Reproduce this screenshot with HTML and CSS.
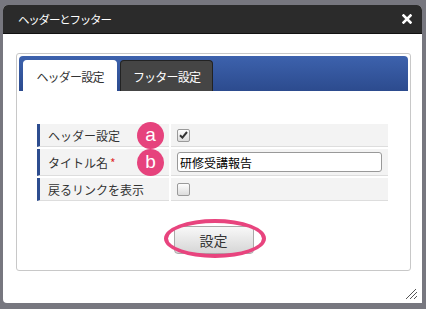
FILE: index.html
```html
<!DOCTYPE html>
<html>
  <head>
    <meta charset="utf-8">
    <title>ヘッダーとフッター</title>
    <link rel="stylesheet" href="styles.css">
  </head>
  <body>
    <div class="dialog">
      <div class="titlebar">
        <span class="title">ヘッダーとフッター</span>
        <svg class="close" width="10" height="10" viewBox="0 0 10 10">
          <path d="M1.5 1.5 L8.5 8.5 M8.5 1.5 L1.5 8.5" stroke="#fff" stroke-width="2.6" stroke-linecap="square"/>
        </svg>
      </div>
      <div class="dialog-body">
        <div class="panel">
          <div class="tabs">
            <div class="tab active">ヘッダー設定</div>
            <div class="tab">フッター設定</div>
          </div>
          <div class="tab-content">
            <div class="form-wrap">
              <table class="form">
                <tr>
                  <th>ヘッダー設定</th>
                  <td>
                    <span class="check checked">
                      <svg width="9" height="8" viewBox="0 0 9 8"><path d="M1 4.2 L3.4 6.6 L8 1" stroke="#333" stroke-width="2" fill="none"/></svg>
                    </span>
                  </td>
                </tr>
                <tr class="tall">
                  <th>タイトル名<span class="req">*</span></th>
                  <td><input class="text" type="text" value="研修受講報告"></td>
                </tr>
                <tr>
                  <th>戻るリンクを表示</th>
                  <td><span class="check"></span></td>
                </tr>
              </table>
              <span class="badge badge-a">a</span>
              <span class="badge badge-b">b</span>
            </div>
            <div class="actions">
              <button class="btn">設定</button>
              <span class="ring"></span>
            </div>
          </div>
        </div>
        <svg class="grip" width="13" height="12" viewBox="0 0 13 12">
          <path d="M1 11 L11 1 M5 11 L12 4 M9 11 L12 8" stroke="#555" stroke-width="1"/>
        </svg>
      </div>
    </div>
  </body>
</html>
```

FILE: styles.css
```css
html, body {
    margin: 0;
    height: 100%;
}

body {
    background: #77777f;
    font-family: "Noto Sans CJK JP", "Noto Sans", sans-serif;
    font-size: 12px;
    color: #333;
    overflow: hidden;
}

.dialog {
    margin: 5px 4px 0 3px;
    height: 298px;
    background: #fff;
    border-radius: 5px 5px 0 4px;
    display: flex;
    flex-direction: column;
}

.titlebar {
    height: 28px;
    background: #2b2b2b;
    border-bottom: 1px solid #111;
    border-radius: 5px 5px 0 0;
    display: flex;
    align-items: center;
    justify-content: space-between;
    padding: 0 10px 0 15px;
}

.title {
    color: #fff;
    font-size: 11.5px;
    letter-spacing: -1.2px;
}

.close {
    display: block;
}

.dialog-body {
    position: relative;
    flex: 1;
    padding: 19px 11px 0 13px;
}

.panel {
    border: 1px solid #c8c8c8;
    border-radius: 3px;
    padding: 2px;
    height: 212px;
}

.tabs {
    height: 31px;
    padding: 4px 4px 0 4px;
    background: linear-gradient(#3d62ad, #2c4b8e);
    border-radius: 4px 4px 0 0;
    display: flex;
    gap: 3px;
}

.tab {
    width: 93px;
    display: flex;
    align-items: center;
    justify-content: center;
    border-radius: 4px 4px 0 0;
    background: #454545;
    border: 1px solid #222;
    border-bottom: 0;
    color: #fff;
    letter-spacing: -0.8px;
    box-sizing: border-box;
}

.tab.active {
    width: 94px;
    background: #fff;
    border-color: #fff;
    color: #333;
}

.tab-content {
    padding: 31px 16px 0 16px;
}

.form-wrap {
    position: relative;
}

.form {
    width: 355px;
    border-collapse: separate;
    border-spacing: 2px;
}

.form th,
.form td {
    background: #f3f3f3;
    border-bottom: 1px solid #ddd;
    height: 22px;
    padding: 0;
    text-align: left;
    font-weight: normal;
}

.form th {
    width: 132px;
    border-left: 3px solid #2d4d8f;
    padding-left: 8px;
    box-sizing: border-box;
}

.form tr.tall th,
.form tr.tall td {
    height: 26px;
}

.form td {
    padding-left: 6px;
}

.req {
    color: #e03030;
    margin-left: 2px;
}

.check {
    display: flex;
    align-items: center;
    justify-content: center;
    width: 11px;
    height: 11px;
    border: 1px solid #9a9a9a;
    border-radius: 2px;
    background: linear-gradient(#fdfdfd, #dcdcdc);
}

.text {
    display: block;
    box-sizing: border-box;
    width: 205px;
    height: 20px;
    border: 1px solid #999;
    border-radius: 3px;
    padding: 0 2px;
    font-family: "Noto Sans CJK JP", sans-serif;
    font-size: 12px;
    color: #000;
    background: #fff;
}

.badge {
    position: absolute;
    left: 102px;
    width: 27px;
    height: 27px;
    border-radius: 50%;
    background: #e6437d;
    color: #fff;
    font-family: "Liberation Sans", Arial, sans-serif;
    font-size: 19px;
    line-height: 25px;
    text-align: center;
}

.badge-a {
    top: 0;
}

.badge-b {
    top: 27px;
}

.actions {
    position: relative;
    display: flex;
    justify-content: center;
    margin-top: 23px;
}

.btn {
    width: 80px;
    height: 28px;
    border: 1px solid #aaa;
    border-radius: 4px;
    background: linear-gradient(#f8f8f8, #d6d6d6);
    font-family: "Noto Sans CJK JP", sans-serif;
    font-size: 14px;
    color: #333;
    padding: 0;
}

.ring {
    position: absolute;
    left: 129px;
    top: -7px;
    width: 94px;
    height: 31px;
    border: 4px solid #e8447e;
    border-radius: 50%;
}

.grip {
    position: absolute;
    right: 4px;
    bottom: 3px;
}
```
